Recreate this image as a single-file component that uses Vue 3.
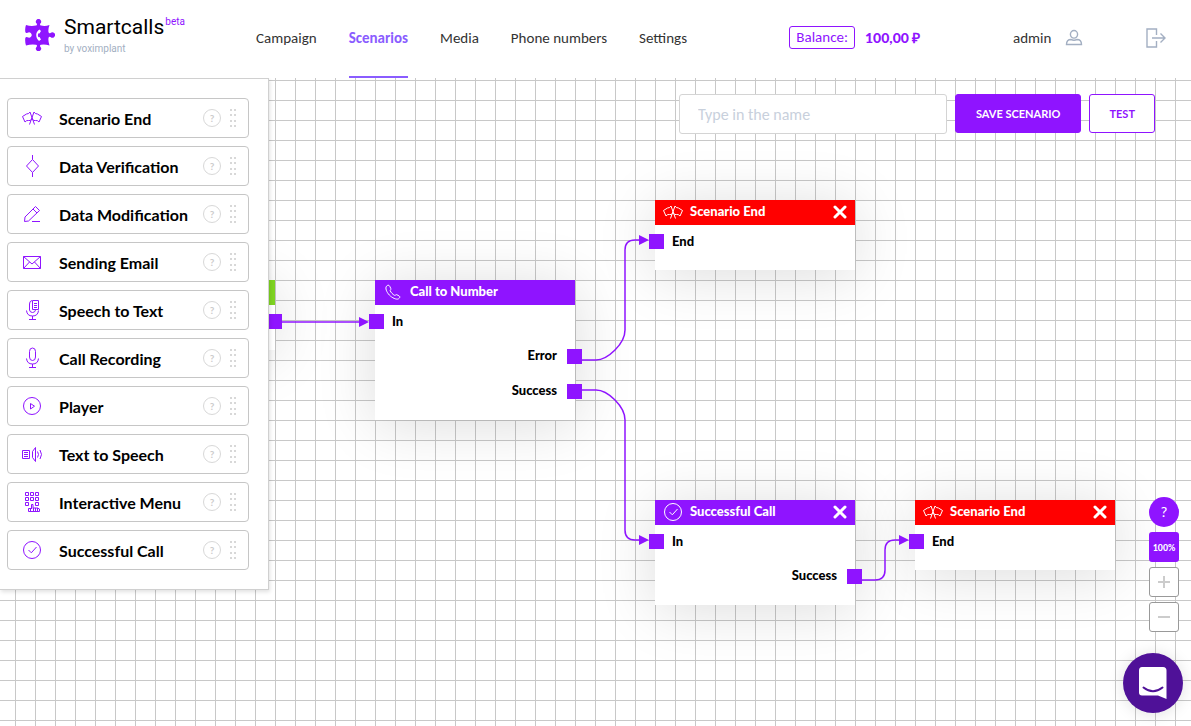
<script setup>
import { ref } from 'vue'

const flags = [
  'M10 6L14.500 18.500M10 6Q9 8 6.500 8L2.500 10.500L5 16Q6.500 14 8.500 14.500Q10.500 15.500 12 12.500',
  'M14 6L9.500 18.500M14 6Q15 8 17.500 8L21.500 10.500L19 16Q17.500 14 15.500 14.500Q13.500 15.500 12 12.500',
]
const successful = [
  'M3.500 12a8.500 8.500 0 1 0 17 0a8.500 8.500 0 1 0-17 0',
  'M8.500 12l2.800 2.800L16.500 9',
]
const phone = [
  'M5.500 6.200C6.500 5 8 4.800 8.700 6.200L9.800 8.500C10.300 9.600 9 10 9.200 10.800C10 12.500 11.800 14.500 13.500 15.300C14.500 15.700 14.800 14.200 16 14.800L18.200 16C19.300 16.700 18.800 18 17.500 18.800C15.500 20 11 17.800 8.300 15C5.500 12 4 8 5.500 6.200Z',
]

const blocks = [
  { name: 'Scenario End', icon: flags },
  { name: 'Data Verification', icon: ['M12.500 1v4.500M12.500 18.500v4.500M12.500 5.500L18.500 12L12.500 18.500L6.500 12Z'] },
  { name: 'Data Modification', icon: ['M15.500 4.500L19.500 8.500L8.500 19L4.500 19.500L5 15Z', 'M13 7L17 11', 'M12 19.500h8'] },
  { name: 'Sending Email', icon: ['M3.500 6.500h17v12h-17z', 'M3.500 6.500L12 14L20.500 6.500M3.500 18.500L9.500 12M20.500 18.500L14.500 12'] },
  { name: 'Speech to Text', icon: ['M12.500 2.500h6v9h-6z', 'M14 5.500h3M14 7.500h3M14 9.500h3', 'M12 2.500Q9.500 3 9.500 6v6Q10 14.500 12.500 14.500Q15 14.500 15.500 12', 'M6.500 12.500Q7 18 12.500 18Q18 18 18.500 12.500M12.500 18v3.500M9 21.500h7'] },
  { name: 'Call Recording', icon: ['M9.500 5.500a3 3.500 0 0 1 6 0v5.500a3 3.500 0 0 1-6 0z', 'M6.500 12.500Q7 18 12.500 18Q18 18 18.500 12.500M12.500 18v3.500M9 21.500h7'] },
  { name: 'Player', icon: ['M3.500 12a8.500 8.500 0 1 0 17 0a8.500 8.500 0 1 0-17 0', 'M10.500 9.500v5.500L14.500 12.200Z'] },
  { name: 'Text to Speech', icon: ['M2.500 8.500h7v8h-7z', 'M4 10.500h4M4 12.500h4M4 14.500h4', 'M12.500 9.500v6M12.500 9.500L15.500 5.500v14L12.500 15.500', 'M17.500 9.500Q19.500 12.500 17.500 15.500M20 8Q23 12.500 20 17'] },
  { name: 'Interactive Menu', icon: ['M5.500 2.500h3v3h-3zM10.500 2.500h3v3h-3zM15.500 2.500h3v3h-3z', 'M5.500 7.500h3v3h-3zM10.500 7.500h3v3h-3zM15.500 7.500h3v3h-3z', 'M5.500 12.500h3v3h-3zM15.500 12.500h3v3h-3z', 'M11.500 19v-4.500h1.500v4M8.500 18.500v3h11v-2.500l-2-1h-4.500M8.500 18.500h3M13.500 18v3M15.500 18v3M17.500 18v3M10.500 19v2'] },
  { name: 'Successful Call', icon: successful },
]

const nodes = [
  { id: 'start', x: 75, y: 202, kind: 'start', title: '', icon: [], closable: false, ports: [{ side: 'out', label: '' }] },
  { id: 'call', x: 375, y: 202, kind: 'action', title: 'Call to Number', icon: phone, closable: false, ports: [{ side: 'in', label: 'In' }, { side: 'out', label: 'Error' }, { side: 'out', label: 'Success' }] },
  { id: 'end-error', x: 655, y: 122, kind: 'end', title: 'Scenario End', icon: flags, closable: true, ports: [{ side: 'in', label: 'End' }] },
  { id: 'success', x: 655, y: 422, kind: 'action', title: 'Successful Call', icon: successful, closable: true, ports: [{ side: 'in', label: 'In' }, { side: 'out', label: 'Success' }] },
  { id: 'end-success', x: 915, y: 422, kind: 'end', title: 'Scenario End', icon: flags, closable: true, ports: [{ side: 'in', label: 'End' }] },
]

const edges = [
  { line: 'M282 244H362', head: 'M359 239L369 244L359 249Z' },
  { line: 'M582 282H596Q605 282 615 272Q625 262 625 252V172Q625 162 635 162H642', head: 'M639 157L649 162L639 167Z' },
  { line: 'M582 312H596Q605 312 615 322Q625 332 625 342V452Q625 462 635 462H642', head: 'M639 457L649 462L639 467Z' },
  { line: 'M862 502H875Q885 502 885 492V472Q885 462 895 462H902', head: 'M899 457L909 462L899 467Z' },
]

const links = ['Campaign', 'Scenarios', 'Media', 'Phone numbers', 'Settings']
const active = ref('Scenarios')
const scenarioName = ref('')
</script>

<template>
  <div class="page">
    <header class="header">
      <a class="brand" href="#">
        <svg class="logo" viewBox="0 0 32 32" aria-hidden="true">
          <path fill="#8f14ff" d="M3 6Q8 7.500 13 6.500Q14.500 6 13.700 4.500A2.600 2.600 0 1 1 17.300 4.500Q16.500 6 18 6.500Q22 7.500 26.500 6Q25 10 25.500 13Q26 15 27.500 14A2.700 2.700 0 1 1 27.500 18Q26 17 25.500 19Q25 22 26.500 26.500Q22 25 18 25.700Q16.500 26 17.300 27.700A2.600 2.600 0 1 1 13.700 27.700Q14.500 26 13 25.700Q8 25 3 26.500Q1.800 23 2.300 19Q3 17.500 4.500 18.300A2.700 2.700 0 1 0 4.500 13.700Q3 14.500 2.300 13Q1.800 9 3 6Z" />
          <path fill="#fff" d="M16.500 10.500C12.500 12.500 12 18.500 16 22L18 20.500L16.500 18L15.500 18.300C14.600 17 14.700 15.500 15.500 14.200L16.500 14.500L18 12Z" />
        </svg>
        <span class="brand-text">
          <span class="brand-name">Smartcalls<sup>beta</sup></span>
          <span class="brand-by">by voximplant</span>
        </span>
      </a>
      <nav class="nav">
        <a v-for="l in links" :key="l" href="#" :class="{ active: l === active }" @click.prevent="active = l">{{ l }}</a>
      </nav>
      <div class="account">
        <span class="balance-label">Balance:</span>
        <strong class="balance">100,00 ₽</strong>
        <a class="user" href="#">
          admin
          <svg width="18" height="18" viewBox="0 0 18 18" aria-hidden="true"><path d="M9 1.500a3.600 3.800 0 1 1 0 7.600a3.600 3.800 0 1 1 0-7.600zM1.500 15.500Q1.500 10.500 6 10.500Q9 12 12 10.500Q16.500 10.500 16.500 15.500Z" /></svg>
        </a>
        <button class="logout" type="button" aria-label="Log out">
          <svg width="20" height="20" viewBox="0 0 20 20" aria-hidden="true"><path d="M10.500 7V1H1v18h9.500v-6M6 10h13M14.500 5.500L19 10l-4.500 4.500" /></svg>
        </button>
      </div>
    </header>

    <main class="stage">
      <div class="canvas">
        <svg class="edges" aria-hidden="true">
          <g v-for="(e, i) in edges" :key="i">
            <path class="line" :d="e.line" />
            <path class="head" :d="e.head" />
          </g>
        </svg>
        <section v-for="n in nodes" :key="n.id" class="node" :class="n.kind" :style="{ left: n.x + 'px', top: n.y + 'px' }">
          <header class="node-head">
            <svg class="icon" viewBox="0 0 24 24" aria-hidden="true"><path v-for="d in n.icon" :key="d" :d="d" /></svg>
            <h2>{{ n.title }}</h2>
            <button v-if="n.closable" type="button" class="close" aria-label="Remove block">
              <svg width="14" height="14" viewBox="0 0 14 14" aria-hidden="true"><path d="M2 2l10 10M12 2L2 12" /></svg>
            </button>
          </header>
          <div class="ports">
            <div v-for="p in n.ports" :key="p.label" class="port" :class="p.side"><i></i><span>{{ p.label }}</span></div>
          </div>
        </section>
      </div>

      <aside class="panel">
        <div v-for="b in blocks" :key="b.name" class="block">
          <svg class="icon" viewBox="0 0 24 24" aria-hidden="true"><path v-for="d in b.icon" :key="d" :d="d" /></svg>
          <span class="block-name">{{ b.name }}</span>
          <button class="hint" type="button">?</button>
          <svg class="grip" width="6" height="18" viewBox="0 0 6 18" aria-hidden="true"><path d="M0 0h2v2H0zM4 0h2v2H4zM0 5h2v2H0zM4 5h2v2H4zM0 11h2v2H0zM4 11h2v2H4zM0 16h2v2H0zM4 16h2v2H4z" /></svg>
        </div>
      </aside>

      <form class="tools" @submit.prevent>
        <input v-model="scenarioName" type="text" placeholder="Type in the name" aria-label="Scenario name" />
        <button class="save" type="submit">SAVE SCENARIO</button>
        <button class="test" type="button">TEST</button>
      </form>

      <div class="zoom">
        <button class="help" type="button">?</button>
        <button class="level" type="button">100%</button>
        <button class="step" type="button" aria-label="Zoom in"><svg width="14" height="14" viewBox="0 0 14 14"><path d="M1 7h12M7 1v12" /></svg></button>
        <button class="step" type="button" aria-label="Zoom out"><svg width="14" height="14" viewBox="0 0 14 14"><path d="M1 7h12" /></svg></button>
      </div>
      <button class="chat" type="button" aria-label="Open chat">
        <svg width="30" height="34" viewBox="0 0 30 34" aria-hidden="true">
          <path fill="#fff" d="M4 1h21q3.500 0 3.500 3.500V33L20 29.500H4Q1 29.500 1 26.500V4.500Q1 1 4 1Z" />
          <path fill="none" stroke="#4f1198" stroke-width="2" stroke-linecap="round" d="M5.500 21.500Q15 29 24.500 21.500" />
        </svg>
      </button>
    </main>
  </div>
</template>

<style>
body { margin: 0; }
</style>

<style scoped>
.page {
  --violet: #8f14ff;
  display: flex;
  flex-direction: column;
  min-height: 100vh;
  font-family: Carlito, Lato, "Noto Sans", sans-serif;
  color: #333;
}
.page * { box-sizing: border-box; }
a { color: inherit; text-decoration: none; }
button { padding: 0; border: 0; background: none; font-family: inherit; cursor: pointer; }

.header { display: flex; height: 78px; background: #fff; }
.brand { display: flex; width: 256px; padding: 15px 0 0 23px; gap: 9px; font-family: Roboto, sans-serif; }
.logo { width: 32px; height: 32px; margin-top: 4px; }
.brand-text { display: flex; flex-direction: column; }
.brand-name { font-size: 21px; line-height: 24px; color: #000; }
.brand-name sup { margin-left: 1px; font-size: 10px; line-height: 10px; vertical-align: 9px; color: var(--violet); }
.brand-by { font-size: 10px; line-height: 20px; color: #a3afc2; }
.nav { display: flex; gap: 32px; font-size: 15px; line-height: 76px; }
.nav a { height: 78px; border-bottom: 2px solid transparent; white-space: nowrap; }
.nav a.active { color: #8a5cff; font-weight: 700; border-color: #8a5cff; }
.account { display: flex; align-items: center; margin-left: auto; padding: 0 25px 3px 0; font-size: 15px; }
.balance-label { padding: 0 6px; border: 1px solid var(--violet); border-radius: 3px; line-height: 21px; color: var(--violet); }
.balance { width: 158px; padding-left: 10px; font: 900 14px Lato, sans-serif; color: var(--violet); }
.user { display: flex; align-items: center; width: 133px; gap: 14px; }
.account svg { fill: none; stroke: #a3afc2; stroke-width: 1.4; }
.logout { display: flex; }

.stage { position: relative; display: flex; flex: 1; align-items: flex-start; justify-content: space-between; overflow: hidden; font-family: Lato, sans-serif; }
.canvas {
  position: absolute;
  inset: 0;
  background-image: linear-gradient(to right, #c8c8c8 1px, transparent 1px), linear-gradient(to bottom, #c8c8c8 1px, transparent 1px);
  background-size: 20px 20px;
  background-position: 15px 2px;
}
.edges { position: absolute; z-index: 1; inset: 0; width: 100%; height: 100%; pointer-events: none; }
.line { fill: none; stroke: var(--violet); stroke-width: 1.5; }
.head { fill: var(--violet); }
.node { position: absolute; width: 200px; background: #fff; box-shadow: 0 5px 60px rgba(0, 0, 0, 0.14); }
.node-head { display: flex; align-items: center; height: 25px; padding: 0 8px 1px 6px; background: var(--violet); color: #fff; }
.end .node-head { background: #f00; }
.start .node-head { background: #7ed321; }
.icon { flex: none; width: 24px; height: 24px; fill: none; stroke: var(--violet); stroke-width: 1; }
.node-head .icon { stroke: #fff; }
h2 { flex: 1; margin: 0 0 2px 5px; font-size: 13px; line-height: 16px; font-weight: 900; }
.close { display: flex; }
.close path { stroke: #fff; stroke-width: 3; stroke-linecap: round; }
.ports { display: flex; flex-direction: column; gap: 20px; padding: 9px 0 21px; }
.port { display: flex; height: 15px; gap: 8px; font-size: 13px; line-height: 15px; font-weight: 900; color: #000; }
.port i { width: 15px; height: 15px; background: var(--violet); }
.port.in { margin-left: -6px; }
.port.out { flex-direction: row-reverse; gap: 10px; margin-right: -7px; line-height: 13px; }

.panel {
  position: relative;
  display: flex;
  flex-direction: column;
  gap: 8px;
  width: 269px;
  padding: 19px 19px 19px 7px;
  border: solid #d0d0d0;
  border-width: 1px 1px 1px 0;
  background: #fff;
  box-shadow: 1px 2px 4px rgba(0, 0, 0, 0.12);
}
.block { display: flex; align-items: center; height: 40px; padding: 0 12px; border: 1px solid #c6c6c6; border-radius: 4px; background: #fff; }
.block-name { flex: 1; padding-left: 15px; font-size: 16px; font-weight: 700; color: #000; white-space: nowrap; }
.hint { width: 18px; height: 18px; border: 1px solid #d8d8d8; border-radius: 50%; font-size: 10px; line-height: 16px; font-weight: 700; color: #ccc; }
.grip { margin-left: 9px; fill: #d8d8d8; }

.tools { position: relative; display: flex; gap: 8px; padding: 16px 36px 0 0; }
.tools input { width: 268px; height: 40px; padding: 0 18px; border: 1px solid #d4d4d4; border-radius: 3px; background: #fff; font: 16px Carlito, Lato, sans-serif; color: #333; }
.tools input::placeholder { color: #c8d0dc; }
.tools button { height: 39px; padding: 0 19px; border: 1px solid var(--violet); border-radius: 3px; font-size: 11px; font-weight: 700; }
.tools .save { padding: 0 20px; background: var(--violet); color: #fff; }
.test { background: #fff; color: var(--violet); }

.zoom { position: absolute; right: 12px; bottom: 94px; display: flex; flex-direction: column; gap: 5px; font-family: Carlito, Lato, sans-serif; }
.zoom button { display: flex; align-items: center; justify-content: center; width: 30px; height: 30px; border-radius: 3px; color: #fff; font-weight: 700; }
.zoom .help { border-radius: 50%; background: var(--violet); font-size: 15px; font-weight: 400; }
.zoom .level { background: var(--violet); font-size: 10px; }
.zoom .step { border: 1px solid #999; background: #fff; }
.step path { stroke: #ccc; stroke-width: 2; }
.chat { position: absolute; right: 8px; bottom: 13px; display: flex; align-items: center; justify-content: center; width: 60px; height: 60px; border-radius: 50%; background: #4f1198; box-shadow: 0 1px 16px rgba(0, 0, 0, 0.12); }
</style>
